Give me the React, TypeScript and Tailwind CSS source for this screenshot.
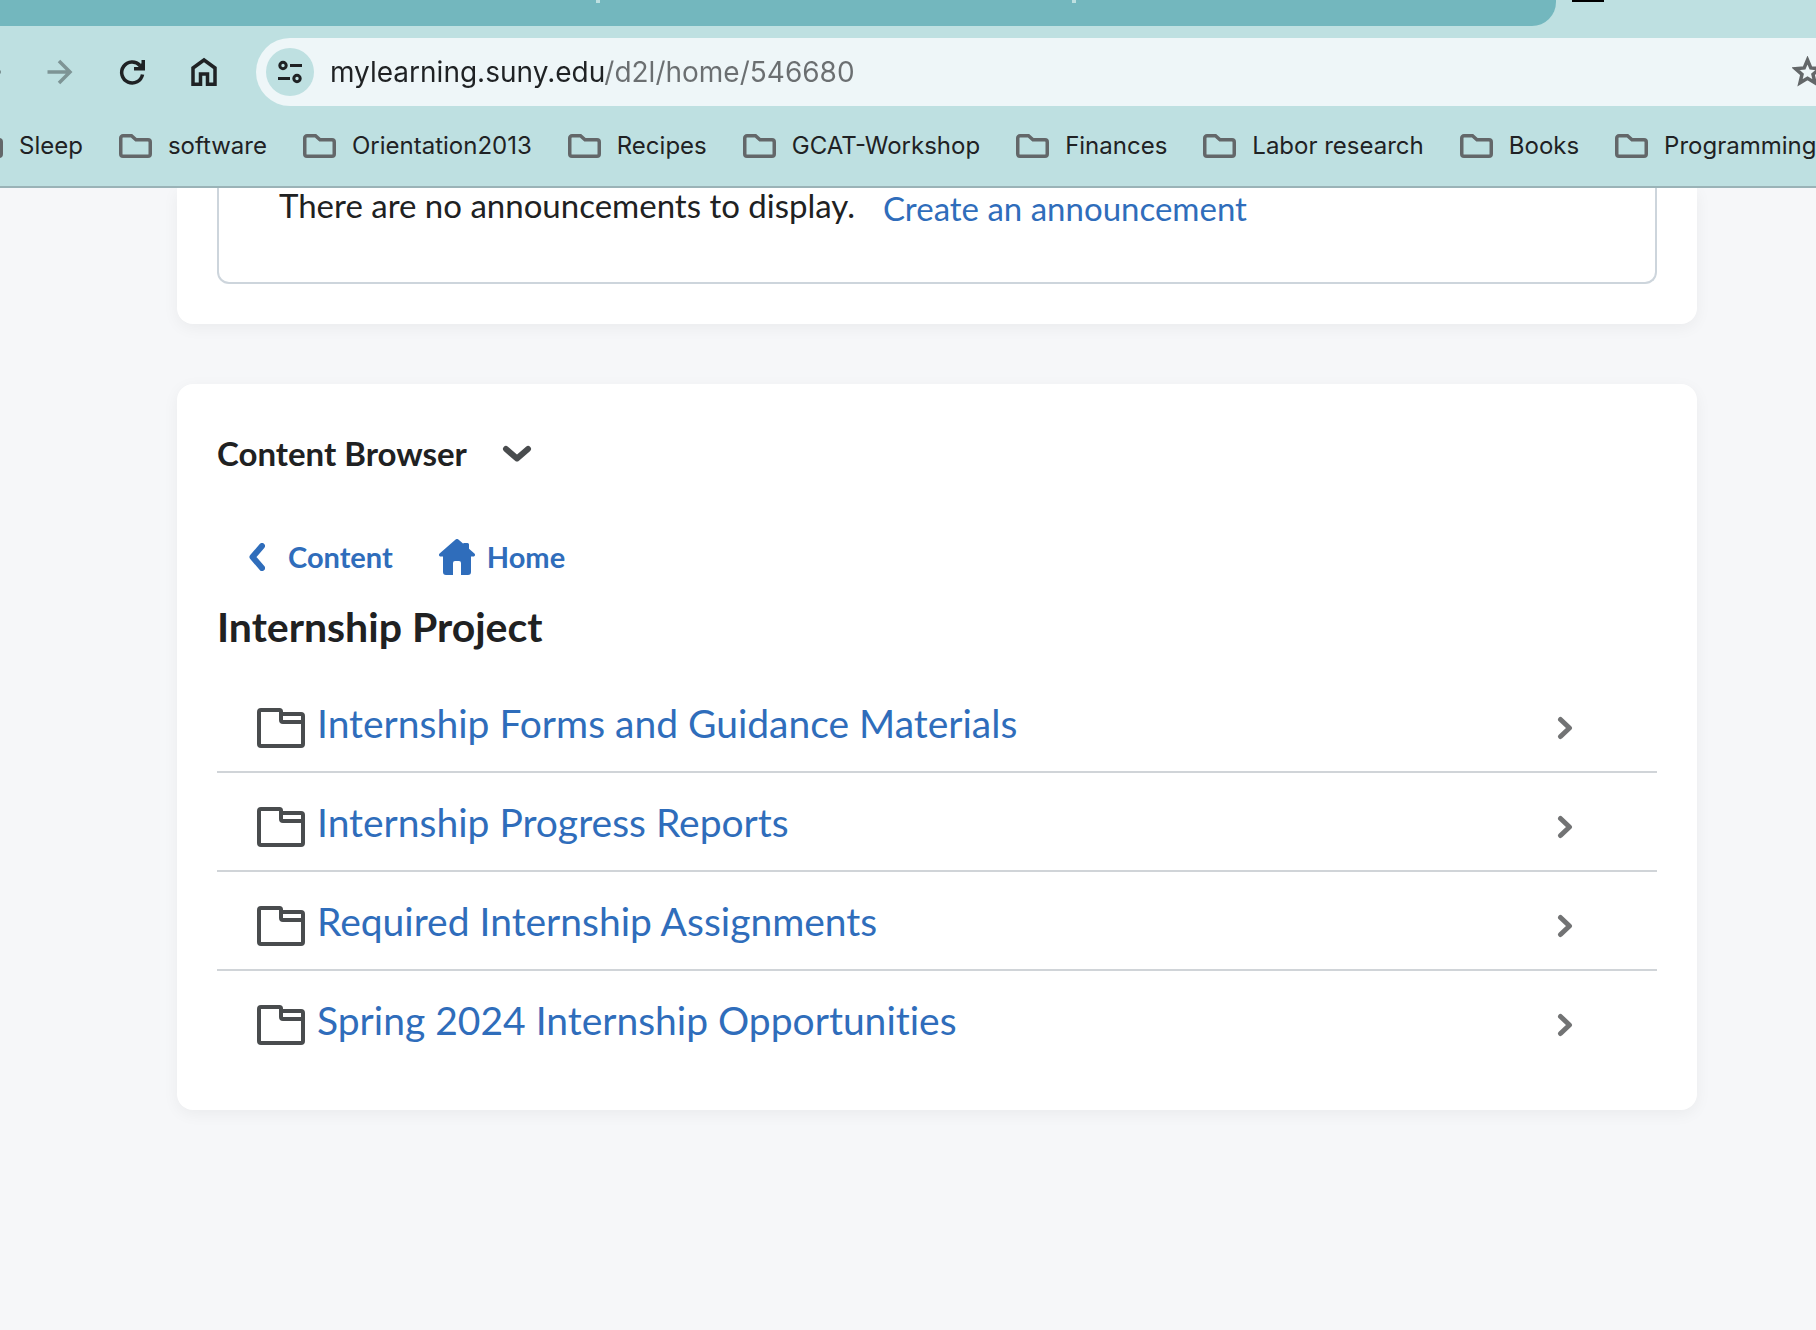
import type { ReactNode } from "react";

const bookmarks = [
  "Sleep",
  "software",
  "Orientation2013",
  "Recipes",
  "GCAT-Workshop",
  "Finances",
  "Labor research",
  "Books",
  "Programming",
];

const modules = [
  "Internship Forms and Guidance Materials",
  "Internship Progress Reports",
  "Required Internship Assignments",
  "Spring 2024 Internship Opportunities",
];

function BookmarkFolderIcon() {
  return (
    <svg className="h-7 w-[33px] shrink-0" viewBox="0 0 33 28" fill="none" stroke="#636769" strokeWidth="3.5">
      <path d="M4 3.75h8.500l4.500 4H29a2.250 2.250 0 0 1 2.250 2.250V22a2.250 2.250 0 0 1-2.250 2.250H4A2.250 2.250 0 0 1 1.750 22V6A2.250 2.250 0 0 1 4 3.750Z" />
    </svg>
  );
}

function ModuleFolderIcon() {
  return (
    <svg className="h-10 w-12 shrink-0" viewBox="0 0 48 40" fill="none" stroke="#494c4e" strokeWidth="4">
      <path d="M4 2h18.500a1.500 1.500 0 0 1 1.500 1.500V6h20a2 2 0 0 1 2 2v28a2 2 0 0 1-2 2H4a2 2 0 0 1-2-2V4a2 2 0 0 1 2-2Z" />
      <path d="M24 5v7a2 2 0 0 0 2 2h20" />
    </svg>
  );
}

function ToolbarButton({ label, children }: { label: string; children: ReactNode }) {
  return (
    <button type="button" aria-label={label} className="flex size-8 shrink-0 items-center justify-center">
      {children}
    </button>
  );
}

function BrowserHeader() {
  return (
    <header className="relative z-10 overflow-hidden border-b-2 border-[#9ab3b7] bg-[#bee0e1] font-['Inter',sans-serif] text-[#1f2224]">
      {/* tab strip */}
      <div className="flex h-[26px] items-start gap-4 pr-[212px]">
        <div className="relative h-full flex-1 rounded-br-3xl bg-[#73b7be]">
          <span className="absolute left-[596px] top-0 h-[3px] w-1 bg-[#bee0e1]" />
          <span className="absolute left-[1072px] top-0 h-[3px] w-1 bg-[#bee0e1]" />
        </div>
        <div className="h-0.5 w-8 bg-black" />
      </div>

      {/* toolbar */}
      <div className="flex items-center pt-3">
        <div className="-ml-7 mr-9 flex items-center gap-10">
          <ToolbarButton label="Back">
            <svg className="size-8" viewBox="0 0 32 32" fill="none" stroke="#7e9495" strokeWidth="3">
              <path d="M29 16H6M17 5 6 16l11 11" />
            </svg>
          </ToolbarButton>
          <ToolbarButton label="Forward">
            <svg className="size-8" viewBox="0 0 32 32" fill="none" stroke="#7e9495" strokeWidth="3.5">
              <path d="M3.500 16H25M15 5l11 11-11 11" />
            </svg>
          </ToolbarButton>
          <ToolbarButton label="Reload">
            <svg className="size-8" viewBox="0 0 32 32" fill="none" stroke="#1f2224" strokeWidth="3.5">
              <path d="M26.500 18.500A10.500 10.500 0 1 1 24 9.500" />
              <path d="M27.250 4v8.750H18" />
              <path d="M22 11h4V7Z" fill="#1f2224" stroke="none" />
            </svg>
          </ToolbarButton>
          <ToolbarButton label="Home">
            <svg className="size-8" viewBox="0 0 32 32" fill="none" stroke="#1f2224" strokeWidth="3.5">
              <path d="M5 12 16 4l11 8v16.250h-7.500V18h-7v10.250H5Z" />
            </svg>
          </ToolbarButton>
        </div>
        <div className="flex h-[68px] flex-1 items-center rounded-l-full bg-[#eef6f8] pl-2.5">
          <button type="button" aria-label="View site information" className="flex size-12 shrink-0 items-center justify-center rounded-full bg-[#bee0e1]">
            <svg className="h-6 w-6" viewBox="0 0 24 24" fill="none" stroke="#1f2224" strokeWidth="3">
              <circle cx="5" cy="5.500" r="3.200" />
              <path d="M12 5.500h12M0 18.500h12" />
              <circle cx="19" cy="18.500" r="3.200" />
            </svg>
          </button>
          <input
            type="text"
            aria-label="Address"
            defaultValue="mylearning.suny.edu/d2l/home/546680"
            className="ml-4 min-w-0 flex-1 bg-[linear-gradient(90deg,#1f2224_274px,#6b6f71_274px)] bg-clip-text text-[28px] leading-9 text-transparent outline-none"
          />
          <button type="button" aria-label="Bookmark this page" className="-mr-2 shrink-0">
            <svg className="size-8" viewBox="0 0 32 32" fill="none" stroke="#636769" strokeWidth="3.500">
              <path d="m15.500 4 3.300 7.900 8.700.8-6.500 5.600 2 8.500-7.500-4.500L8 26.800l2-8.500-6.500-5.600 8.700-.8Z" />
            </svg>
          </button>
        </div>
      </div>

      {/* bookmarks bar */}
      <nav aria-label="Bookmarks" className="-ml-[30px] flex h-20 items-center gap-9 whitespace-nowrap text-2xl">
        {bookmarks.map((name) => (
          <a key={name} href="#" className="flex items-center gap-4">
            <BookmarkFolderIcon />
            {name}
          </a>
        ))}
      </nav>
    </header>
  );
}

function Announcements() {
  return (
    <section className="rounded-b-2xl bg-white px-10 pb-10 shadow-[0_4px_16px_rgba(0,0,0,0.05)]">
      <div className="flex items-start gap-7 rounded-b-xl border-2 border-t-0 border-[#cdd5dc] px-[60px] pb-[54px] text-[33px]">
        <p className="leading-[34px]">There are no announcements to display.</p>
        <a href="#" className="leading-10 text-[#2f6dbb]">
          Create an announcement
        </a>
      </div>
    </section>
  );
}

function ContentBrowser() {
  return (
    <section className="rounded-2xl bg-white px-10 pb-[42px] pt-[45px] shadow-[0_4px_16px_rgba(0,0,0,0.05)]">
      <div className="flex h-12 items-center gap-[34px]">
        <h2 className="text-[33px] font-bold leading-10">Content Browser</h2>
        <button type="button" aria-label="Content Browser actions">
          <svg className="h-5 w-8" viewBox="0 0 32 20" fill="none" stroke="#494c4e" strokeWidth="6" strokeLinecap="round" strokeLinejoin="round">
            <path d="m5 6 11 9.500L27 6" />
          </svg>
        </button>
      </div>

      <div className="mt-[60px] flex h-10 items-center gap-[46px] pl-8 text-[29px] font-bold leading-9 text-[#2f6dbb]">
        <a href="#" className="flex items-center gap-[23px]">
          <svg className="h-7 w-4" viewBox="0 0 16 28" fill="none" stroke="#2f6dbb" strokeWidth="6" strokeLinecap="round" strokeLinejoin="round">
            <path d="M13 3 3.500 14 13 25" />
          </svg>
          Content
        </a>
        <a href="#" className="flex items-center gap-3">
          <svg className="size-9" viewBox="0 0 36 36" fill="#2f6dbb">
            <path d="M16.600.6a2 2 0 0 1 2.800 0L24 4.500A1.500 1.500 0 0 1 25.500 4h3A1.500 1.500 0 0 1 30 5.500v4.300l5.400 4.800c1.200 1.100.6 2.900-1 2.900H32V33a3 3 0 0 1-3 3h-7V24a2 2 0 0 0-2-2h-4a2 2 0 0 0-2 2v12H7a3 3 0 0 1-3-3V17.500H1.600c-1.600 0-2.200-1.800-1-2.900Z" />
          </svg>
          Home
        </a>
      </div>

      <h3 className="mt-5 text-[41px] font-bold leading-[60px]">Internship Project</h3>

      <ul className="mt-[17px] divide-y-2 divide-[#d0d4d8]">
        {modules.map((name) => (
          <li key={name}>
            <a href="#" className="flex h-[97px] items-center gap-3 pl-10 pr-20 pt-[11px]">
              <ModuleFolderIcon />
              <span className="flex-1 pb-2.5 text-[39px] leading-[48px] text-[#2f6dbb] [font-variant-ligatures:none]">{name}</span>
              <svg className="h-6 w-6 shrink-0" viewBox="0 0 24 24" fill="none" stroke="#727374" strokeWidth="5" strokeLinecap="round" strokeLinejoin="round">
                <path d="m7.500 3.500 9 8.500-9 8.500" />
              </svg>
            </a>
          </li>
        ))}
      </ul>
    </section>
  );
}

export default function App() {
  return (
    <div className="min-h-screen bg-[#f6f7f9] font-['Lato',sans-serif] text-[#202122]">
      <BrowserHeader />
      <main className="ml-[177px] mr-[119px] flex flex-col gap-[60px]">
        <Announcements />
        <ContentBrowser />
      </main>
    </div>
  );
}
